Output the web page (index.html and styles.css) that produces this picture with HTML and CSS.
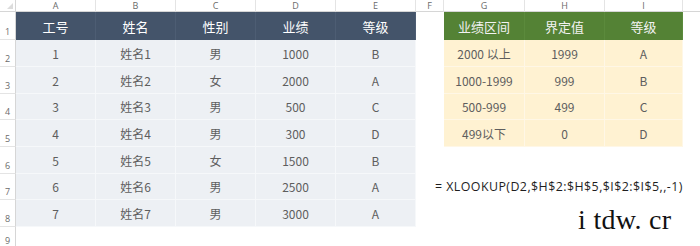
FILE: index.html
```html
<!DOCTYPE html>
<html lang="zh">
<head>
<meta charset="utf-8">
<link rel="stylesheet" href="styles.css">
</head>
<body>
<div class="sheet">
  <div class="ch corner"><span class="tri"></span></div>
  <div class="ch">A</div><div class="ch">B</div><div class="ch">C</div><div class="ch">D</div><div class="ch">E</div><div class="ch">F</div><div class="ch">G</div><div class="ch">H</div><div class="ch">I</div><div class="ch last"></div>

  <div class="rh">1</div>
  <div class="c hd">工号</div><div class="c hd">姓名</div><div class="c hd">性别</div><div class="c hd">业绩</div><div class="c hd">等级</div>
  <div class="c"></div>
  <div class="c gh">业绩区间</div><div class="c gh">界定值</div><div class="c gh">等级</div><div class="c"></div>

  <div class="rh">2</div>
  <div class="c bd">1</div><div class="c bd">姓名1</div><div class="c bd">男</div><div class="c bd">1000</div><div class="c bd">B</div>
  <div class="c"></div>
  <div class="c cr">2000 以上</div><div class="c cr">1999</div><div class="c cr">A</div><div class="c"></div>

  <div class="rh">3</div>
  <div class="c bd">2</div><div class="c bd">姓名2</div><div class="c bd">女</div><div class="c bd">2000</div><div class="c bd">A</div>
  <div class="c"></div>
  <div class="c cr">1000-1999</div><div class="c cr">999</div><div class="c cr">B</div><div class="c"></div>

  <div class="rh">4</div>
  <div class="c bd">3</div><div class="c bd">姓名3</div><div class="c bd">男</div><div class="c bd">500</div><div class="c bd">C</div>
  <div class="c"></div>
  <div class="c cr">500-999</div><div class="c cr">499</div><div class="c cr">C</div><div class="c"></div>

  <div class="rh">5</div>
  <div class="c bd">4</div><div class="c bd">姓名4</div><div class="c bd">男</div><div class="c bd">300</div><div class="c bd">D</div>
  <div class="c"></div>
  <div class="c cr">499以下</div><div class="c cr">0</div><div class="c cr">D</div><div class="c"></div>

  <div class="rh">6</div>
  <div class="c bd">5</div><div class="c bd">姓名5</div><div class="c bd">女</div><div class="c bd">1500</div><div class="c bd">B</div>
  <div class="c span5"></div>

  <div class="rh">7</div>
  <div class="c bd">6</div><div class="c bd">姓名6</div><div class="c bd">男</div><div class="c bd">2500</div><div class="c bd">A</div>
  <div class="c span5 formula">= XLOOKUP(D2,$H$2:$H$5,$I$2:$I$5,,-1)</div>

  <div class="rh">8</div>
  <div class="c bd">7</div><div class="c bd">姓名7</div><div class="c bd">男</div><div class="c bd">3000</div><div class="c bd">A</div>
  <div class="c span5"></div>

  <div class="rh last-row">9</div>
  <div class="c span10"></div>

  <div class="watermark">i tdw. cr</div>
</div>
</body>
</html>
```
FILE: styles.css
```css
html, body {
  margin: 0;
  padding: 0;
  background: #ffffff;
}
.sheet {
  position: relative;
  width: 700px;
  height: 246px;
  overflow: hidden;
  display: grid;
  grid-template-columns: 16px 80px 80px 80px 80px 80px 28px 81px 80px 78px 17px;
  grid-template-rows: 12px 28px 27px 27px 26px 27px 27px 26px 27px 19px;
  font-family: "Open Sans", "Noto Sans CJK SC", sans-serif;
}
.ch {
  display: flex;
  align-items: center;
  justify-content: center;
  font-size: 9px;
  color: #6b6b6b;
  border-right: 1px solid #e4e4e4;
  border-bottom: 1px solid #d6d6d6;
  box-sizing: border-box;
  line-height: 1;
}
.ch.last { border-right: none; }
.corner {
  position: relative;
  border-right: 1px solid #d6d6d6;
}
.tri {
  position: absolute;
  right: 2px;
  bottom: 2px;
  width: 0;
  height: 0;
  border-left: 6px solid transparent;
  border-bottom: 6px solid #dcdcdc;
}
.rh {
  display: flex;
  align-items: flex-end;
  justify-content: center;
  padding-bottom: 3px;
  font-size: 9px;
  color: #6b6b6b;
  border-right: 1px solid #d6d6d6;
  border-bottom: 1px solid #e4e4e4;
  box-sizing: border-box;
  line-height: 1;
}
.rh.last-row {
  border-bottom: none;
  padding-bottom: 1px;
}
.c {
  display: flex;
  align-items: center;
  justify-content: center;
  font-size: 12px;
  color: #5e5e5e;
  box-sizing: border-box;
  font-family: "Noto Sans CJK SC", sans-serif;
}
.hd {
  background: #44546a;
  color: #ffffff;
  font-size: 13px;
  border-right: 1px solid #4d5d73;
}
.gh {
  background: #548235;
  color: #f2f2f2;
  font-size: 13px;
  border-right: 1px solid #5b8a3c;
}
.bd {
  background: #edf0f4;
  border-right: 1px solid #f6f8fa;
  border-bottom: 1px solid #f6f8fa;
}
.cr {
  background: #fff2d2;
  border-right: 1px solid #fff7e6;
  border-bottom: 1px solid #fff7e6;
}
.span5 { grid-column: span 5; }
.span10 { grid-column: span 10; }
.formula {
  justify-content: flex-start;
  padding-left: 19px;
  padding-bottom: 2px;
  font-family: "Open Sans", sans-serif;
  font-size: 12.4px;
  letter-spacing: 0.45px;
  color: #1e1e1e;
}
.watermark {
  position: absolute;
  left: 578px;
  top: 206px;
  font-family: "Liberation Serif", serif;
  font-size: 28px;
  color: #111111;
  letter-spacing: 0.3px;
  line-height: 1;
  white-space: nowrap;
}
```
